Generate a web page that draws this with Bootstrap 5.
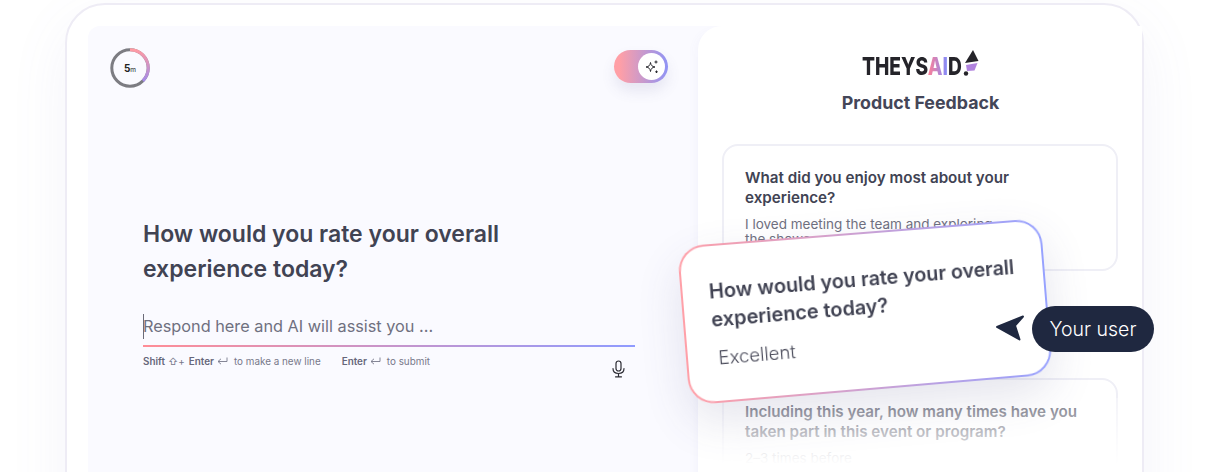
<!DOCTYPE html>
<html lang="en">
<head>
    <meta charset="UTF-8">
    <meta name="viewport" content="width=device-width, initial-scale=1.0">
    <title>TheySaid Product Feedback</title>
    <link href="https://cdn.jsdelivr.net/npm/bootstrap@5.3.1/dist/css/bootstrap.min.css" rel="stylesheet">
    <script src="https://cdn.jsdelivr.net/npm/bootstrap@5.3.1/dist/js/bootstrap.bundle.min.js"></script>
    <style>
        body { font-family: Inter, "Liberation Sans", sans-serif; background: #fff; color: #414353; }
        .stage { width: 1208px; height: 472px; overflow: hidden; }
        .frame { width: 1079px; height: 540px; margin: 3px 0 0 65px; padding: 21px 0 0 21px; background: #fff; border: 2px solid #eeecf5; border-radius: 40px; box-shadow: 0 20px 60px rgba(110, 110, 190, .08); }
        .frame-inner { height: 100%; background: #fafaff; border-radius: 12px 0 0 0; }
        .left-pane { width: 610px; padding: 22px 30px 0 22px; }
        .right-pane { width: 444px; background: #fff; border-radius: 24px 0 0 0; padding: 26px 23px 0 24px; box-shadow: -8px 0 12px -8px rgba(110, 110, 190, .06); }
        .timer-box { width: 40px; height: 40px; }
        .timer-text { font-size: 10px; font-weight: 700; color: #222; line-height: 1; }
        .timer-text span { font-size: 6.5px; font-weight: 400; }
        .ai-toggle { width: 54px; height: 33px; margin-top: 2px; border-radius: 17px; padding: 2px 3px 2px 2px; background: linear-gradient(90deg, #ff9fa6 10%, #8f93f5 100%); box-shadow: 0 8px 14px rgba(90, 90, 150, .12); }
        .toggle-knob { width: 27px; height: 27px; background: #fff; border-radius: 50%; }
        .main-question { margin: 129px 0 0 33px; font-size: 23px; font-weight: 600; line-height: 35px; color: #414353; }
        .answer-area { margin: 27px 33px 0 33px; }
        .caret-bar { width: 1px; height: 25px; margin-right: -1px; background: #6b6b78; }
        .answer-input { font-family: Inter, sans-serif; font-size: 16.3px; line-height: 25px; color: #6f7080; outline: 0; }
        .answer-input::placeholder { color: #6f7080; opacity: 1; }
        .grad-line { height: 2px; margin-top: 6px; background: linear-gradient(90deg, #ff8d96, #8f9bff); }
        .hints { margin-top: 7px; height: 14px; font-size: 9.9px; line-height: 14px; color: #77788a; white-space: nowrap; }
        .hints b { font-weight: 600; color: #66677a; }
        .hint-shift { margin-left: 3px; }
        .hint-plus { margin-right: 4px; }
        .hint-ret { margin: 0 6px 0 3px; }
        .hint-next { margin-left: 21px; }
        .mic-icon { margin: 13px 9px 0 auto; }
        .logo-row { height: 25px; }
        .logo-text { display: inline-block; margin: 2px -30px 0 0; font-size: 25px; font-weight: 800; line-height: 25px; color: #25242a; transform: scaleX(.767); transform-origin: left center; }
        .logo-ai { background: linear-gradient(90deg, #ff7f95, #7f8cff); -webkit-background-clip: text; background-clip: text; color: transparent; }
        .logo-mark { margin: -4px 0 0 -1px; }
        .feedback-title { margin: 14px 0 0; font-size: 17.8px; font-weight: 700; line-height: 24px; color: #444658; }
        .answer-card { width: 396px; height: 127px; border: 2px solid #efeff6; border-radius: 16px; background: #fff; padding: 22px 20px 0 21px; font-size: 14px; }
        .card-one { margin-top: 29px; }
        .card-two { margin-top: 107px; height: 160px; }
        .card-q { max-width: 340px; font-size: 15.2px; font-weight: 600; line-height: 20px; color: #414353; margin-bottom: 9px; }
        .card-a { font-size: 13.5px; line-height: 15px; color: #6f7080; width: 255px; }
        .fade-cover { left: 700px; top: 398px; width: 442px; height: 74px; background: linear-gradient(rgba(255, 255, 255, .3), #fff 90%); }
        .float-card { left: 684px; top: 232px; width: 365px; height: 158px; padding: 31px 20px 0 26px; transform: perspective(1000px) rotate(-4.7deg) rotateY(2.5deg); border: 2px solid transparent; border-radius: 26px; background: linear-gradient(#fff, #fff) padding-box, linear-gradient(90deg, #ffa0a8, #97a2ff) border-box; box-shadow: 0 18px 46px rgba(70, 70, 130, .14); }
        .float-q { font-size: 19.8px; font-weight: 600; line-height: 28px; color: #414353; white-space: nowrap; }
        .float-a { margin: 12px 0 0 4px; font-size: 18.4px; font-weight: 300; line-height: 24px; color: #4c4d5c; }
        .user-pointer { left: 994px; top: 313px; }
        .user-pill { left: 1032px; top: 306px; width: 122px; height: 46px; padding-top: 1px; border-radius: 23px; background: #1f2840; color: #fff; font-size: 19.5px; font-weight: 300; }
    </style>
</head>
<body>
    <div class="stage position-relative">
        <div class="frame">
            <div class="frame-inner d-flex">
                <!-- Left: the question -->
                <div class="left-pane flex-shrink-0">
                    <div class="d-flex justify-content-between align-items-start">
                        <div class="timer-box position-relative d-flex align-items-center justify-content-center">
                            <svg class="position-absolute top-0 start-0" width="40" height="40" viewBox="0 0 40 40">
                                <defs>
                                    <linearGradient id="timerGrad" x1="0" y1="0" x2="0" y2="1">
                                        <stop offset="0" stop-color="#ff9aa3"/>
                                        <stop offset="1" stop-color="#a48be8"/>
                                    </linearGradient>
                                </defs>
                                <circle cx="20" cy="20" r="18.2" fill="none" stroke="#7c7c82" stroke-width="3"/>
                                <path d="M20 1.8A18.2 18.2 0 0 1 32.9 32.9" fill="none" stroke="url(#timerGrad)" stroke-width="3"/>
                            </svg>
                            <div class="timer-text">5<span>m</span></div>
                        </div>
                        <div class="ai-toggle d-flex justify-content-end align-items-center">
                            <div class="toggle-knob d-flex align-items-center justify-content-center">
                                <svg width="16" height="16" viewBox="0 0 16 16" fill="none" stroke="#26262c" stroke-width="1" stroke-linejoin="round">
                                    <path d="M6.5 3.5C7 6.5 8 7.5 11 8C8 8.5 7 9.5 6.5 12.5C6 9.5 5 8.5 2 8C5 7.5 6 6.5 6.5 3.5Z"/>
                                    <path d="M12 1.5V4.5M10.5 3H13.5M12.5 11.5V14M11.2 12.8H13.8"/>
                                </svg>
                            </div>
                        </div>
                    </div>
                    <h2 class="main-question">How would you rate your overall<br>experience today?</h2>
                    <div class="answer-area">
                        <div class="d-flex align-items-center">
                            <span class="caret-bar"></span>
                            <input class="answer-input flex-grow-1 border-0 bg-transparent p-0" type="text" placeholder="Respond here and AI will assist you ...">
                        </div>
                        <div class="grad-line"></div>
                        <div class="d-flex align-items-start">
                            <div class="hints d-flex align-items-center">
                                <b>Shift</b><span class="hint-shift">⇧</span><span class="hint-plus">+</span><b>Enter</b>
                                <svg class="hint-ret" width="11" height="9" viewBox="0 0 11 9" fill="none" stroke="#77788a" stroke-width=".9"><path d="M10 .5V4.5H1.2M4 1.8L1 4.5L4 7.2"/></svg>
                                <span>to make a new line</span>
                                <b class="hint-next">Enter</b>
                                <svg class="hint-ret" width="11" height="9" viewBox="0 0 11 9" fill="none" stroke="#77788a" stroke-width=".9"><path d="M10 .5V4.5H1.2M4 1.8L1 4.5L4 7.2"/></svg>
                                <span>to submit</span>
                            </div>
                            <svg class="mic-icon" width="15" height="18" viewBox="0 0 15 18" fill="none" stroke="#2b2b33" stroke-width="1.2" stroke-linecap="round">
                                <rect x="5" y="1" width="5" height="10" rx="2.5"/>
                                <path d="M2 8.5C2 11.8 4.4 13.5 7.5 13.5S13 11.8 13 8.5M7.5 13.5V16.5M4.5 16.8H10.5"/>
                            </svg>
                        </div>
                    </div>
                </div>

                <!-- Right: the survey preview -->
                <div class="right-pane flex-shrink-0">
                    <div class="logo-row d-flex justify-content-center align-items-start">
                        <span class="logo-text">THEYS<span class="logo-ai">AI</span>D</span>
                        <svg class="logo-mark" width="17" height="30" viewBox="0 0 17 30">
                            <path d="M11 2L16.5 13L3 15Z" fill="#25242a"/>
                            <path d="M4 17L15.5 15L12.5 22.5L5 23Z" fill="#b183de"/>
                            <circle cx="4" cy="25.5" r="2.2" fill="#25242a"/>
                        </svg>
                    </div>
                    <h3 class="feedback-title text-center">Product Feedback</h3>
                    <div class="answer-card card-one">
                        <div class="card-q">What did you enjoy most about your experience?</div>
                        <div class="card-a">I loved meeting the team and exploring the showcase.</div>
                    </div>
                    <div class="answer-card card-two">
                        <div class="card-q">Including this year, how many times have you taken part in this event or program?</div>
                        <div class="card-a">2–3 times before</div>
                    </div>
                </div>
            </div>
        </div>

        <!-- Things lying over the frame -->
        <div class="fade-cover position-absolute"></div>
        <div class="float-card position-absolute">
            <div class="float-q">How would you rate your overall<br>experience today?</div>
            <div class="float-a">Excellent</div>
        </div>
        <svg class="user-pointer position-absolute" width="34" height="30" viewBox="0 0 34 30">
            <path d="M3 14L29 3.5L21 12.5L25.5 26.5Z" fill="#1f2840" stroke="#1f2840" stroke-width="2" stroke-linejoin="round"/>
        </svg>
        <div class="user-pill position-absolute d-flex align-items-center justify-content-center">Your user</div>
    </div>
</body>
</html>
